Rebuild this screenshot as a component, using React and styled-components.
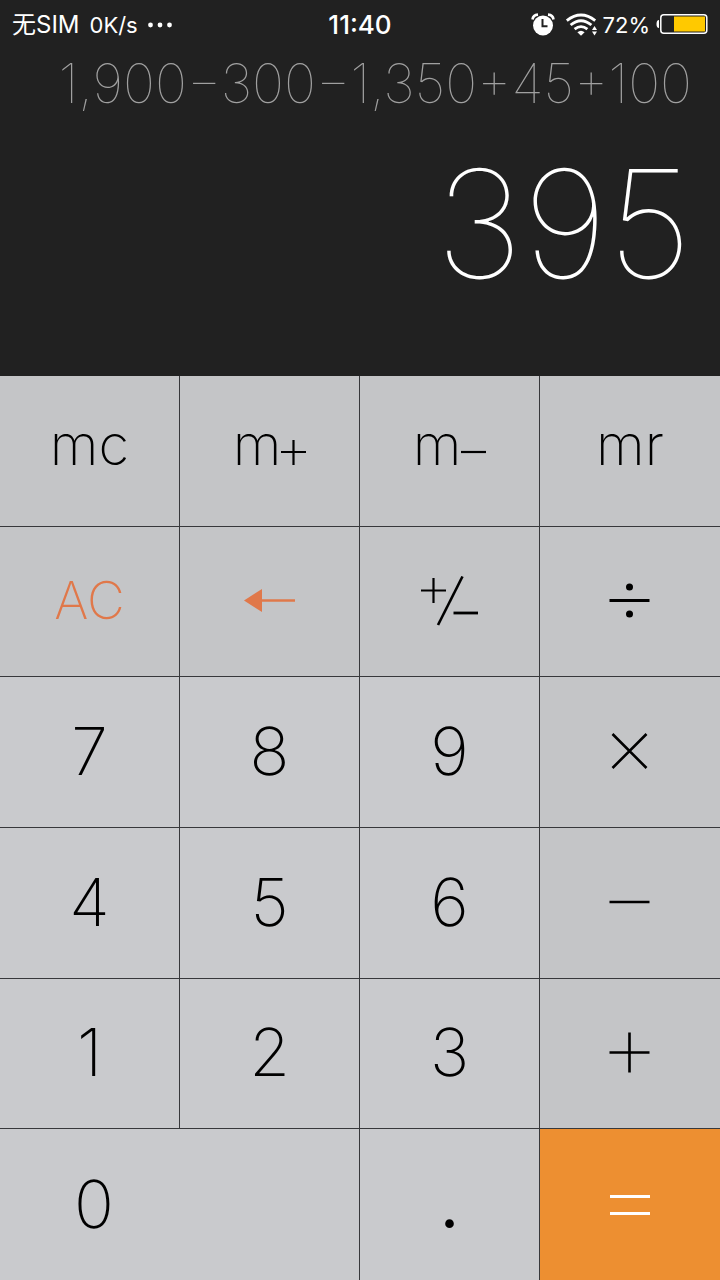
import styled, { createGlobalStyle } from 'styled-components'

const GlobalStyle = createGlobalStyle`
	* {
		box-sizing: border-box;
	}

	body {
		margin: 0;
		background: #212121;
		font-family: Inter, 'Noto Sans CJK SC', sans-serif;
	}
`

const keys = [
	{ id: 'mc', label: 'mc', kind: 'memory' },
	{ id: 'm+', label: 'm', icon: 'smallPlus', kind: 'memory', aria: 'm+' },
	{ id: 'm-', label: 'm', icon: 'smallMinus', kind: 'memory', aria: 'm−' },
	{ id: 'mr', label: 'mr', kind: 'memory' },
	{ id: 'ac', label: 'AC', kind: 'clear' },
	{ id: 'back', icon: 'back', kind: 'clear', aria: 'backspace' },
	{ id: 'sign', icon: 'sign', kind: 'operator', aria: '+/−' },
	{ id: 'divide', icon: 'divide', kind: 'operator', aria: '÷' },
	{ id: '7', label: '7', kind: 'digit' },
	{ id: '8', label: '8', kind: 'digit' },
	{ id: '9', label: '9', kind: 'digit' },
	{ id: 'times', icon: 'times', kind: 'operator', aria: '×' },
	{ id: '4', label: '4', kind: 'digit' },
	{ id: '5', label: '5', kind: 'digit' },
	{ id: '6', label: '6', kind: 'digit' },
	{ id: 'minus', icon: 'minus', kind: 'operator', aria: '−' },
	{ id: '1', label: '1', kind: 'digit' },
	{ id: '2', label: '2', kind: 'digit' },
	{ id: '3', label: '3', kind: 'digit' },
	{ id: 'plus', icon: 'plus', kind: 'operator', aria: '+' },
	{ id: '0', label: '0', kind: 'digit', wide: true },
	{ id: 'dot', label: '.', kind: 'point' },
	{ id: 'equals', icon: 'equals', kind: 'equals', aria: '=' },
]

const kinds = {
	memory: { background: '#c4c5c7', color: '#000', size: 56, weight: 200, lift: 12 },
	clear: { background: '#c4c5c7', color: '#e0784a', size: 52, weight: 200, lift: 0 },
	operator: { background: '#c4c5c7', color: '#000', size: 66, weight: 200, lift: 0 },
	digit: { background: '#c9cacd', color: '#000', size: 66, weight: 200, lift: 2 },
	point: { background: '#c9cacd', color: '#000', size: 66, weight: 400, lift: 2 },
	equals: { background: '#ed8f31', color: '#fff', size: 66, weight: 200, lift: 0 },
}

const Calculator = styled.main`
	display: flex;
	flex-direction: column;
	min-height: 100vh;
`

const StatusBar = styled.header`
	display: grid;
	grid-template-columns: 1fr auto 1fr;
	align-items: center;
	height: 50px;
	padding: 0 12px;
	color: #fff;
	font-size: 22px;
	line-height: 30px;
`

const StatusGroup = styled.div`
	display: flex;
	align-items: center;
	justify-content: ${({ $end }) => ($end ? 'flex-end' : 'flex-start')};
	gap: ${({ $end }) => ($end ? '6px' : '10px')};
`

const Carrier = styled.span`
	font-size: 24px;
`

const Clock = styled.time`
	font-size: 26px;
	font-weight: 500;
`

const Display = styled.section`
	display: flex;
	flex-direction: column;
	align-items: flex-end;
	padding: 0 28px 46px;
	text-align: right;
`

const Expression = styled.div`
	color: #a0a0a0;
	font-size: 54px;
	font-weight: 100;
	line-height: 68px;
	white-space: nowrap;
`

const Result = styled.output`
	color: #fff;
	font-size: 150px;
	font-weight: 100;
	line-height: 212px;
`

const Keypad = styled.section`
	display: grid;
	flex: 1;
	grid-template-columns: repeat(4, 1fr);
	grid-template-rows: repeat(6, minmax(72px, 1fr));
`

const Key = styled.button`
	display: flex;
	align-items: center;
	justify-content: ${({ $wide }) => ($wide ? 'flex-start' : 'center')};
	grid-column: span ${({ $wide }) => ($wide ? 2 : 1)};
	margin: 0;
	padding: 0 ${({ $wide }) => ($wide ? '74px' : '0')} ${({ $kind }) => kinds[$kind].lift}px;
	border: 0 solid #37383b;
	border-width: 0 1px 1px 0;
	border-radius: 0;
	background: ${({ $kind }) => kinds[$kind].background};
	color: ${({ $kind }) => kinds[$kind].color};
	font-family: inherit;
	font-size: ${({ $kind }) => kinds[$kind].size}px;
	font-weight: ${({ $kind }) => kinds[$kind].weight};
	line-height: 1;
	cursor: pointer;

	&:nth-child(4n) {
		border-right-width: 0;
	}

	&:nth-last-child(-n + 3) {
		border-bottom-width: 0;
	}

	&:last-child {
		border-right-width: 0;
	}

	&:active {
		filter: brightness(0.9);
	}
`

const KeyFace = styled.span`
	display: flex;
	align-items: baseline;
`

const MoreIcon = () => (
	<svg width='24' height='6' viewBox='0 0 24 6' fill='#fff' aria-hidden='true'>
		<circle cx='2.5' cy='3' r='2.4' />
		<circle cx='12' cy='3' r='2.4' />
		<circle cx='21.5' cy='3' r='2.4' />
	</svg>
)

const AlarmIcon = () => (
	<svg width='24' height='24' viewBox='0 0 24 24' fill='none' aria-hidden='true'>
		<circle cx='12' cy='12.5' r='10' fill='#fff' />
		<path d='M1.5 6.5 Q2 2 7 1.6 M22.5 6.5 Q22 2 17 1.6' stroke='#fff' strokeWidth='2.6' />
		<path d='M11.5 6 V13.2 H16.5' stroke='#212121' strokeWidth='2' />
	</svg>
)

const WifiIcon = () => (
	<svg width='36' height='24' viewBox='-5 0 36 24' fill='none' aria-hidden='true'>
		<g stroke='#fff' strokeWidth='2.8'>
			<path d='M0.8 7.6 Q15 -3.6 29.2 7.6' />
			<path d='M4.6 12 Q15 3.4 25.4 12' />
			<path d='M8.6 16.2 Q15 11 21.4 16.2' />
		</g>
		<path d='M11.4 19.2 Q15 16.2 18.6 19.2 L15 22.8 Z' fill='#fff' />
		<path d='M28.5 13 L31 17 H26 Z M28.5 22.6 L31 18.6 H26 Z' fill='#fff' />
	</svg>
)

const BatteryIcon = () => (
	<svg width='52' height='22' viewBox='0 0 52 22' fill='none' aria-hidden='true'>
		<path d='M3 6 Q0.5 6 0.5 10 Q0.5 14 3 14 Z' fill='#fff' />
		<rect x='4.8' y='0.8' width='46' height='18.5' rx='3' stroke='#fff' strokeWidth='1.5' />
		<rect x='18' y='2.5' width='31' height='15' fill='#ffc900' />
	</svg>
)

const BackIcon = () => (
	<svg width='52' height='24' viewBox='0 0 52 24' aria-hidden='true'>
		<path d='M0 11.5 L18 0 V23 Z' fill='currentColor' />
		<path d='M17 11.5 H51' stroke='currentColor' strokeWidth='2.6' />
	</svg>
)

const SignIcon = () => (
	<svg width='58' height='50' viewBox='0 0 58 50' stroke='currentColor' aria-hidden='true'>
		<path d='M0 14.5 H25 M12.5 2 V27' strokeWidth='2.2' />
		<path d='M41.5 0.5 L17 49' strokeWidth='2.6' />
		<path d='M32.5 37 H57' strokeWidth='2.8' />
	</svg>
)

const OperatorIcon = ({ children, width = 3 }) => (
	<svg
		width='42'
		height='42'
		viewBox='0 0 42 42'
		fill='none'
		stroke='currentColor'
		strokeWidth={width}
		aria-hidden='true'
	>
		{children}
	</svg>
)

const DivideIcon = () => (
	<OperatorIcon width={3.2}>
		<path d='M0.5 20.5 H40.5' />
		<circle cx='20.5' cy='7' r='3.5' fill='currentColor' stroke='none' />
		<circle cx='20.5' cy='34' r='3.5' fill='currentColor' stroke='none' />
	</OperatorIcon>
)

const TimesIcon = () => (
	<OperatorIcon width={2.6}>
		<path d='M3.5 3 L37.5 37 M37.5 3 L3.5 37' />
	</OperatorIcon>
)

const MinusIcon = () => (
	<OperatorIcon width={2.6}>
		<path d='M0.5 20 H40.5' />
	</OperatorIcon>
)

const PlusIcon = () => (
	<OperatorIcon width={2.6}>
		<path d='M0.5 20.5 H40.5 M20.5 0.5 V40.5' />
	</OperatorIcon>
)

const EqualsIcon = () => (
	<OperatorIcon>
		<path d='M1 12.5 H41 M1 29.5 H41' />
	</OperatorIcon>
)

const SmallPlusIcon = () => (
	<svg width='25' height='25' viewBox='0 0 25 25' stroke='currentColor' strokeWidth='2.2' aria-hidden='true'>
		<path d='M0 12 H25 M12.5 0 V25' />
	</svg>
)

const SmallMinusIcon = () => (
	<svg width='25' height='25' viewBox='0 0 25 25' stroke='currentColor' strokeWidth='2.2' aria-hidden='true'>
		<path d='M0 12 H25' />
	</svg>
)

const icons = {
	back: BackIcon,
	sign: SignIcon,
	divide: DivideIcon,
	times: TimesIcon,
	minus: MinusIcon,
	plus: PlusIcon,
	equals: EqualsIcon,
	smallPlus: SmallPlusIcon,
	smallMinus: SmallMinusIcon,
}

const App = () => {
	return (
		<Calculator>
			<GlobalStyle />
			<StatusBar>
				<StatusGroup>
					<Carrier>无SIM</Carrier>
					<span>0K/s</span>
					<MoreIcon />
				</StatusGroup>
				<Clock>11:40</Clock>
				<StatusGroup $end>
					<AlarmIcon />
					<WifiIcon />
					<span>72%</span>
					<BatteryIcon />
				</StatusGroup>
			</StatusBar>
			<Display>
				<Expression>1,900−300−1,350+45+100</Expression>
				<Result>395</Result>
			</Display>
			<Keypad>
				{keys.map(({ id, label, icon, kind, wide, aria }) => {
					const Icon = icons[icon]
					return (
						<Key
							key={id}
							type='button'
							$kind={kind}
							$wide={wide}
							aria-label={aria}
						>
							<KeyFace>
								{label}
								{Icon && <Icon />}
							</KeyFace>
						</Key>
					)
				})}
			</Keypad>
		</Calculator>
	)
}

export default App
